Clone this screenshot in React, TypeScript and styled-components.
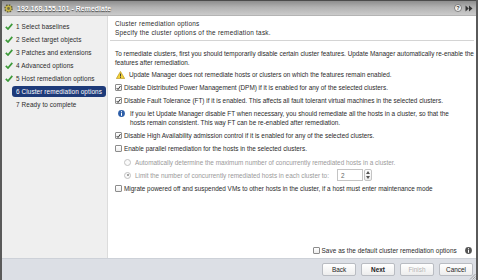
import React from "react";
import styled, { createGlobalStyle } from "styled-components";

const GlobalStyle = createGlobalStyle`
  html, body { margin: 0; padding: 0; background: #ffffff; }
  body { font-family: "Liberation Sans", Arial, sans-serif; color: #2b2b2b; }
  * { box-sizing: border-box; }
`;

const Dialog = styled.div`
  position: relative;
  width: 478px;
  height: 280px;
  display: flex;
  flex-direction: column;
  border-left: 2px solid #5a5a5a;
  border-right: 2px solid #5a5a5a;
  font-size: 6.4px;
  overflow: hidden;
`;

const TitleBar = styled.div`
  height: 16px;
  flex: none;
  display: flex;
  align-items: center;
  gap: 4px;
  padding: 0 3px 0 2px;
  background: linear-gradient(to bottom, #8e8e8e 0%, #b2b2b2 45%, #cbcbcb 100%);
  border-top: 1px solid #4c4c4c;
  border-bottom: 1px solid #b4b4b4;
`;

const Title = styled.span`
  flex: 1;
  color: #ffffff;
  font-weight: bold;
  font-size: 6.8px;
  letter-spacing: 0.1px;
  text-shadow: 0 1px 1px #3a3a3a;
`;

const TitleTools = styled.div`
  display: flex;
  align-items: center;
  gap: 3px;
`;

const Body = styled.div`
  flex: 1;
  display: flex;
  min-height: 0;
`;

const Sidebar = styled.div`
  width: 106px;
  flex: none;
  background: #efefef;
  border-right: 1px solid #dcdcdc;
  padding-top: 5px;
  display: flex;
  flex-direction: column;
  gap: 2px;
`;

const Step = styled.div<{ $active?: boolean }>`
  height: 11px;
  display: flex;
  align-items: center;
  white-space: nowrap;
  letter-spacing: 0.1px;
  color: ${(p) => (p.$active ? "#ffffff" : "#2b2b2b")};
  background: ${(p) => (p.$active ? "#1d3a79" : "transparent")};
  border-radius: ${(p) => (p.$active ? "3px" : "0")};
  margin-left: ${(p) => (p.$active ? "10px" : "0")};
  margin-right: ${(p) => (p.$active ? "1px" : "0")};
  padding-left: ${(p) => (p.$active ? "4px" : "3px")};
`;

const CheckSlot = styled.span`
  width: 11px;
  display: flex;
  align-items: center;
`;

const Content = styled.div`
  flex: 1;
  display: flex;
  flex-direction: column;
  padding: 0 6px 4px 2px;
  background: #ffffff;
`;

const Header = styled.div`
  padding: 3px 0 3px 5px;
  border-bottom: 1px solid #d4d4d4;
  letter-spacing: 0.25px;
  line-height: 9px;
`;

const Section = styled.div`
  padding-left: 5px;
  display: flex;
  flex-direction: column;
`;

const Para = styled.div<{ $mt?: number }>`
  margin-top: ${(p) => p.$mt ?? 0}px;
  line-height: 9px;
  white-space: nowrap;
`;

const Row = styled.div<{ $mt?: number; $indent?: number; $muted?: boolean }>`
  margin-top: ${(p) => p.$mt ?? 0}px;
  padding-left: ${(p) => p.$indent ?? 0}px;
  display: flex;
  align-items: center;
  gap: 2px;
  min-height: 9px;
  white-space: nowrap;
  color: ${(p) => (p.$muted ? "#9a9a9a" : "#2b2b2b")};
`;

const IconRow = styled.div<{ $mt?: number; $indent?: number; $gap?: number }>`
  margin-top: ${(p) => p.$mt ?? 0}px;
  padding-left: ${(p) => p.$indent ?? 0}px;
  display: flex;
  align-items: flex-start;
  gap: ${(p) => p.$gap ?? 4}px;
  line-height: 9px;
  white-space: nowrap;
`;

const IconBox = styled.span`
  height: 9px;
  display: flex;
  align-items: center;
  flex: none;
`;

const Box = styled.span`
  width: 7px;
  height: 7px;
  flex: none;
  border: 1px solid #8c8c8c;
  border-radius: 1px;
  background: linear-gradient(#ffffff, #ededed);
  display: flex;
  align-items: center;
  justify-content: center;
`;

const Radio = styled.span<{ $on?: boolean }>`
  width: 7px;
  height: 7px;
  flex: none;
  margin-right: 2px;
  border: 1px solid #c2c2c2;
  border-radius: 50%;
  background: #fafafa;
  display: flex;
  align-items: center;
  justify-content: center;
  &::after {
    content: "";
    width: 2px;
    height: 2px;
    border-radius: 50%;
    background: ${(p) => (p.$on ? "#8a8a8a" : "transparent")};
  }
`;

const Spinner = styled.span`
  display: inline-flex;
  align-items: stretch;
  height: 12px;
  margin-left: 6px;
`;

const SpinInput = styled.span`
  width: 26px;
  border: 1px solid #c4c4c4;
  padding-left: 3px;
  display: flex;
  align-items: center;
  color: #666;
  background: #fff;
`;

const SpinArrows = styled.span`
  width: 8px;
  margin-left: 1px;
  border: 1px solid #c4c4c4;
  border-radius: 2px;
  display: flex;
  flex-direction: column;
  align-items: center;
  justify-content: space-around;
  background: linear-gradient(#ffffff, #eeeeee);
`;

const Spacer = styled.div`
  flex: 1;
`;

const SaveRow = styled.div`
  display: flex;
  justify-content: flex-end;
  align-items: center;
  gap: 2px;
  letter-spacing: 0.05px;
  padding-right: 2px;
`;

const SaveInfo = styled.span`
  display: flex;
  margin-left: 6px;
`;

const Footer = styled.div`
  height: 22px;
  flex: none;
  background: #dcdfe5;
  border-top: 1px solid #cdd1d8;
  display: flex;
  justify-content: flex-end;
  align-items: center;
  gap: 5px;
  padding: 0 3px 1px 0;
`;

const Button = styled.button<{ $primary?: boolean; $disabled?: boolean }>`
  width: 34px;
  height: 13px;
  padding: 0;
  font-family: "Liberation Sans", Arial, sans-serif;
  font-size: 6.4px;
  font-weight: ${(p) => (p.$primary ? "bold" : "normal")};
  color: ${(p) => (p.$disabled ? "#b4b4b4" : "#222222")};
  background: linear-gradient(#ffffff, #ededed);
  border: 1px solid #b9bcc2;
  border-radius: 2px;
`;

const Grip = styled.svg`
  position: absolute;
  right: 0;
  bottom: 0;
`;

const GreenCheck = () => (
  <svg width="8" height="7" viewBox="0 0 8 7">
    <path d="M0.8 3.8 L3 6 L7.3 0.9" fill="none" stroke="#3d9a3a" strokeWidth="1.7" />
  </svg>
);

const Tick = () => (
  <svg width="6" height="6" viewBox="0 0 6 6">
    <path d="M0.8 3 L2.4 4.8 L5.4 0.6" fill="none" stroke="#222" strokeWidth="1.1" />
  </svg>
);

const WarnIcon = () => (
  <svg width="9" height="8" viewBox="0 0 9 8">
    <path d="M4.5 0.4 L8.7 7.6 L0.3 7.6 Z" fill="#f2d23a" stroke="#b08a10" strokeWidth="0.6" />
    <rect x="4.05" y="2.6" width="0.9" height="2.9" fill="#333" />
    <rect x="4.05" y="6.1" width="0.9" height="0.9" fill="#333" />
  </svg>
);

const InfoIcon = ({ color = "#2d5ea8" }: { color?: string }) => (
  <svg width="7" height="7" viewBox="0 0 7 7">
    <circle cx="3.5" cy="3.5" r="3.4" fill={color} />
    <rect x="3" y="1.2" width="1" height="1" fill="#fff" />
    <rect x="3" y="2.8" width="1" height="3" fill="#fff" />
  </svg>
);

const Checkbox = ({ checked }: { checked?: boolean }) => <Box>{checked && <Tick />}</Box>;

const steps = [
  "1 Select baselines",
  "2 Select target objects",
  "3 Patches and extensions",
  "4 Advanced options",
  "5 Host remediation options",
  "6 Cluster remediation options",
  "7 Ready to complete",
];

export default function App() {
  return (
    <>
      <GlobalStyle />
      <Dialog>
        <TitleBar>
          <svg width="9" height="9" viewBox="0 0 9 9">
            <circle cx="4.5" cy="4.5" r="3.6" fill="#c9b74a" stroke="#5d5a3a" strokeWidth="1.4" strokeDasharray="1.6 1.2" />
            <circle cx="4.5" cy="4.5" r="1.4" fill="#6b6a4a" />
          </svg>
          <Title>192.168.155.101 - Remediate</Title>
          <TitleTools>
            <svg width="8" height="8" viewBox="0 0 8 8">
              <circle cx="4" cy="4" r="3.5" fill="#f4f4f4" stroke="#666" strokeWidth="0.8" />
              <text x="4" y="6.2" fontSize="5.5" textAnchor="middle" fill="#333" fontFamily="Liberation Sans" fontWeight="bold">?</text>
            </svg>
            <svg width="8" height="7" viewBox="0 0 8 7">
              <path d="M0.5 0.5 L3.8 3.5 L0.5 6.5 Z M4 0.5 L7.5 3.5 L4 6.5 Z" fill="#333" />
            </svg>
          </TitleTools>
        </TitleBar>
        <Body>
          <Sidebar>
            {steps.map((s, i) =>
              i === 5 ? (
                <Step key={s} $active>{s}</Step>
              ) : (
                <Step key={s}>
                  <CheckSlot>{i < 5 && <GreenCheck />}</CheckSlot>
                  {s}
                </Step>
              )
            )}
          </Sidebar>
          <Content>
            <Header>
              <div>Cluster remediation options</div>
              <div>Specify the cluster options of the remediation task.</div>
            </Header>
            <Section>
              <Para $mt={8}>
                To remediate clusters, first you should temporarily disable certain cluster features. Update Manager automatically re-enable the
                <br />
                features after remediation.
              </Para>
              <IconRow $mt={3} $indent={1}>
                <IconBox><WarnIcon /></IconBox>
                <span>Update Manager does not remediate hosts or clusters on which the features remain enabled.</span>
              </IconRow>
              <Row $mt={4}>
                <Checkbox checked />
                <span>Disable Distributed Power Management (DPM) if it is enabled for any of the selected clusters.</span>
              </Row>
              <Row $mt={4}>
                <Checkbox checked />
                <span>Disable Fault Tolerance (FT) if it is enabled. This affects all fault tolerant virtual machines in the selected clusters.</span>
              </Row>
              <IconRow $mt={4} $indent={3} $gap={5}>
                <IconBox><InfoIcon /></IconBox>
                <Para>
                  If you let Update Manager disable FT when necessary, you should remediate all the hosts in a cluster, so that the
                  <br />
                  hosts remain consistent. This way FT can be re-enabled after remediation.
                </Para>
              </IconRow>
              <Row $mt={4}>
                <Checkbox checked />
                <span>Disable High Availability admission control if it is enabled for any of the selected clusters.</span>
              </Row>
              <Row $mt={4}>
                <Checkbox />
                <span>Enable parallel remediation for the hosts in the selected clusters.</span>
              </Row>
              <Row $mt={5} $indent={9} $muted>
                <Radio />
                <span>Automatically determine the maximum number of concurrently remediated hosts in a cluster.</span>
              </Row>
              <Row $mt={2} $indent={9} $muted>
                <Radio $on />
                <span>Limit the number of concurrently remediated hosts in each cluster to:</span>
                <Spinner>
                  <SpinInput>2</SpinInput>
                  <SpinArrows>
                    <svg width="4" height="3" viewBox="0 0 4 3"><path d="M0 3 L2 0 L4 3 Z" fill="#555" /></svg>
                    <svg width="4" height="3" viewBox="0 0 4 3"><path d="M0 0 L2 3 L4 0 Z" fill="#555" /></svg>
                  </SpinArrows>
                </Spinner>
              </Row>
              <Row $mt={3}>
                <Checkbox />
                <span>Migrate powered off and suspended VMs to other hosts in the cluster, if a host must enter maintenance mode</span>
              </Row>
            </Section>
            <Spacer />
            <SaveRow>
              <Checkbox />
              <span>Save as the default cluster remediation options</span>
              <SaveInfo><InfoIcon color="#555" /></SaveInfo>
            </SaveRow>
          </Content>
        </Body>
        <Footer>
          <Button>Back</Button>
          <Button $primary>Next</Button>
          <Button $disabled>Finish</Button>
          <Button>Cancel</Button>
        </Footer>
        <Grip width="7" height="7" viewBox="0 0 7 7">
          <path d="M6.5 1 L1 6.5 M6.5 3.5 L3.5 6.5 M6.5 5.5 L5.5 6.5" stroke="#888" strokeWidth="0.7" />
        </Grip>
      </Dialog>
    </>
  );
}
